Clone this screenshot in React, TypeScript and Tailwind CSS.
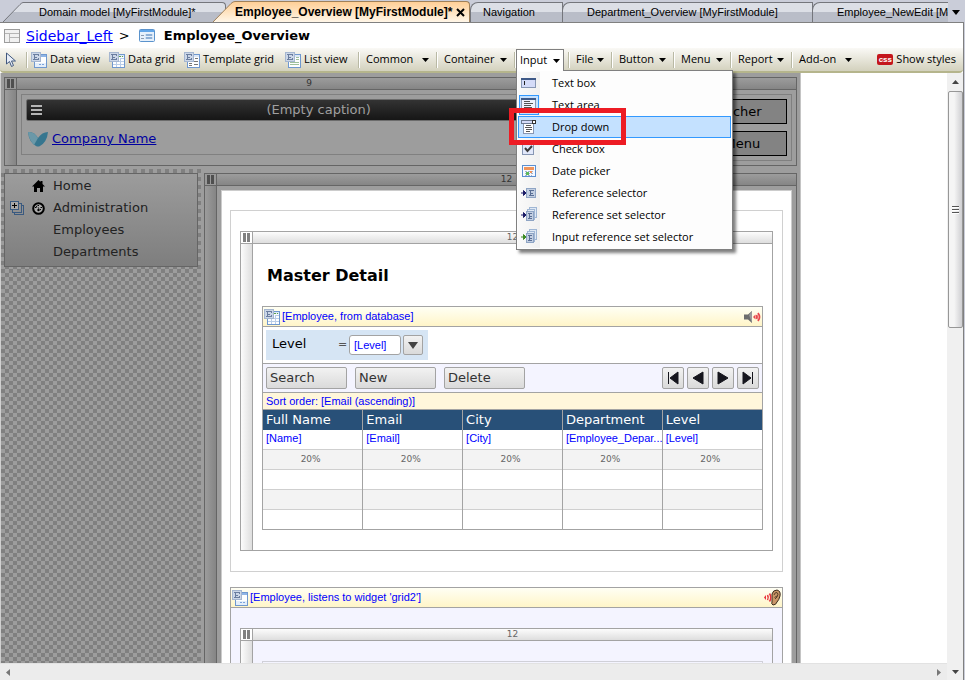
import React from "react";

const UI = "font-['Open_Sans','Noto_Sans',sans-serif]";
const SANS = "font-['Liberation_Sans',Arial,sans-serif]";
const VERDANA = "font-['DejaVu_Sans',Verdana,sans-serif]";

type IconKind = "view" | "grid" | "template" | "list";

function EntityIcon({ kind }: { kind: IconKind }) {
  return (
    <svg width="16" height="16" viewBox="0 0 16 16" className="shrink-0" shapeRendering="crispEdges">
      <rect x="3.5" y="2.5" width="12" height="13" fill="#fdfeff" stroke="#6f98cf" />
      <rect x="4" y="3" width="11" height="2" fill={kind === "view" ? "#8fb5e6" : "#dce8f7"} />
      {kind === "grid" && (
        <>
          <path d="M11 6.500h4M4 9.500h11M4 12.500h11M7.500 10v5M11.500 6v9" stroke="#b9cde8" fill="none" />
          <path d="M10 4.500h2M13 4.500h1" stroke="#5aa04c" fill="none" />
        </>
      )}
      {kind === "view" && (
        <>
          <rect x="4" y="11" width="11" height="4" fill="#e4eefa" />
          <path d="M8 12.500h2M11 12.500h2" stroke="#7ba4dc" fill="none" />
        </>
      )}
      {kind === "template" && (
        <path d="M11 6.500h3M5 11.500h3M5 13.500h3M10 9.500h4M10 12.500h4" stroke="#777" fill="none" />
      )}
      {kind === "list" && <path d="M11 5.500h3M11 7.500h3M5 10.500h9M5 12.500h9" stroke="#9fc09c" fill="none" />}
      <rect x="0.500" y="0.500" width="9" height="9" fill="#ccd7e8" stroke="#a5b6d0" />
      <path d="M2 2.500h5M3.500 3v4M2 7.500h5M4 5h2" stroke="#6a7d9f" fill="none" />
      <path d="M7.500 2v2M7.500 6v2" stroke="#6a7d9f" />
    </svg>
  );
}

function Caret() {
  return (
    <svg width="7" height="4" viewBox="0 0 7 4" className="shrink-0" aria-hidden="true">
      <path d="M0 0h7L3.500 4z" fill="#000" />
    </svg>
  );
}

/* ---------- document tabs ---------- */

function Tab({ children, className }: { children: React.ReactNode; className: string }) {
  return (
    <button
      className={`flex h-5 items-center overflow-hidden rounded-tl-lg border-l border-r border-t border-[#74767c] bg-linear-to-b from-[#dcdfe6] from-50% to-[#b9bdc8] to-50% whitespace-nowrap text-left ${className}`}
    >
      {children}
    </button>
  );
}

function TabBar() {
  return (
    <nav className={`flex h-[23px] shrink-0 items-end overflow-hidden border-b border-[#808080] bg-[#cacdd9] pl-[3px] text-xs ${SANS}`}>
      <button className="flex h-5 w-[223px] shrink-0 items-end text-left">
        <svg width="20" height="20" viewBox="0 0 20 20" className="shrink-0">
          <defs>
            <linearGradient id="idle-tab" x1="0" y1="0" x2="0" y2="1">
              <stop offset="0.5" stopColor="#dcdfe6" />
              <stop offset="0.5" stopColor="#b9bdc8" />
            </linearGradient>
          </defs>
          <path d="M0 20L17 2.500Q19 .5 20 .5V20z" fill="url(#idle-tab)" />
          <path d="M0 20L17 2.500Q19 .5 20 .5" fill="none" stroke="#74767c" />
        </svg>
        <span className="flex h-5 flex-1 items-center rounded-tr-sm border-r border-t border-[#74767c] bg-linear-to-b from-[#dcdfe6] from-50% to-[#b9bdc8] to-50% pl-4 text-[11px] whitespace-nowrap">
          Domain model [MyFirstModule]*
        </span>
      </button>
      <div className="relative z-10 -ml-[13px] flex h-[21px] w-[257px] shrink-0 items-end">
        <svg width="22" height="21" viewBox="0 0 22 21" className="shrink-0">
          <defs>
            <linearGradient id="active-tab" x1="0" y1="0" x2="0" y2="1">
              <stop offset="0" stopColor="#ffcf96" />
              <stop offset="1" stopColor="#fff6e8" />
            </linearGradient>
          </defs>
          <path d="M0 21L18 2.500Q20 .5 22 .5V21z" fill="url(#active-tab)" />
          <path d="M0 21L18 2.500Q20 .5 22 .5" fill="none" stroke="#a0815a" />
        </svg>
        <div className="flex h-[21px] flex-1 items-center justify-between rounded-tr-sm border-r border-t border-[#a0815a] bg-linear-to-b from-[#ffcf96] to-[#fff6e8] pr-1 text-xs font-bold whitespace-nowrap">
          <button>Employee_Overview [MyFirstModule]*</button>
          <button aria-label="Close tab">
            <svg width="9" height="9" viewBox="0 0 9 9" className="block">
              <path d="M1 1l7 7M8 1L1 8" stroke="#000" strokeWidth="2" />
            </svg>
          </button>
        </div>
      </div>
      <Tab className="w-[93px] shrink-0 pl-3 text-[11px]">Navigation</Tab>
      <Tab className="-ml-px w-[251px] shrink-0 pl-6 text-[11px]">Department_Overview [MyFirstModule]</Tab>
      <Tab className="-ml-px min-w-0 flex-1 border-r-0 pl-6 text-[11px]">Employee_NewEdit [MyFirstModule]</Tab>
      <button className="flex h-5 w-4 shrink-0 items-center justify-center" aria-label="More tabs">
        <svg width="8" height="5" viewBox="0 0 8 5">
          <path d="M0 0h8L4 5z" fill="#000" />
        </svg>
      </button>
    </nav>
  );
}

function Breadcrumb() {
  return (
    <div className={`flex h-[25px] shrink-0 items-center bg-white pl-1 text-[13px] text-black ${VERDANA}`}>
      <svg width="16" height="14" viewBox="0 0 16 14" className="mr-[6px] shrink-0" shapeRendering="crispEdges">
        <rect x=".5" y=".5" width="15" height="13" fill="#f1f1f1" stroke="#9c9c9c" />
        <path d="M1 4.500h14M5.500 4v9M6 8.500h9" stroke="#b5b5b5" />
      </svg>
      <a href="#sidebar" className="text-sm text-[#0000ff] underline">Sidebar_Left</a>
      <span className="ml-[6px] w-5">&gt;</span>
      <svg width="16" height="13" viewBox="0 0 16 13" className="mr-[9px] shrink-0">
        <rect x=".5" y=".5" width="15" height="12" rx="1" fill="#e6f0fb" stroke="#5b93cc" />
        <rect x="1" y="1" width="14" height="2" fill="#62a5e8" />
        <path d="M2 6.500h3M2 9.500h3" stroke="#8d9bb0" />
        <path d="M7 5.500h6v1H7zM7 8.500h6v1H7z" fill="#fff" stroke="#8fb0d6" />
      </svg>
      <strong>Employee_Overview</strong>
    </div>
  );
}

/* ---------- toolbar ---------- */

function Separator() {
  return <span className="h-4 w-[2px] shrink-0 border-l border-[#b9b9a4] bg-white" />;
}

function ToolButton({ kind, label, className }: { kind: IconKind; label: string; className: string }) {
  return (
    <button className={`flex shrink-0 items-center gap-[3px] whitespace-nowrap ${className}`}>
      <EntityIcon kind={kind} />
      {label}
    </button>
  );
}

function ToolMenu({ label, className }: { label: string; className: string }) {
  return (
    <button className={`flex shrink-0 items-center justify-between whitespace-nowrap pl-[6px] pr-[7px] ${className}`}>
      {label}
      <Caret />
    </button>
  );
}

function MenuGlyph({ name }: { name: string }) {
  const set = name === "refset" || name === "inputset";
  return (
    <svg width="16" height="16" viewBox="0 0 16 16" className="shrink-0" shapeRendering="crispEdges">
      {name === "text" && (
        <>
          <rect x=".5" y="3.500" width="14" height="9" fill="#d4dbf8" stroke="#8796b3" />
          <path d="M0 4h15" stroke="#3f5a88" strokeWidth="2" />
          <path d="M3.500 6v4" stroke="#222" />
        </>
      )}
      {name === "area" && (
        <>
          <rect x=".5" y="1.500" width="14" height="13" fill="#eef1ff" stroke="#8796b3" />
          <path d="M0 2h15" stroke="#3f5a88" strokeWidth="2" />
          <path d="M3 4.500h6M3 6.500h9M3 8.500h7M3 10.500h8M3 12.500h5" stroke="#555" />
        </>
      )}
      {name === "drop" && (
        <>
          <rect x="2.500" y="4.500" width="10" height="10" fill="#fff" stroke="#8796b3" />
          <rect x=".5" y="1.500" width="14" height="3" fill="#d4dbf8" stroke="#69788f" />
          <rect x="11.500" y="1.500" width="3" height="3" fill="#fff" stroke="#333" />
          <path d="M5 6.500h5M4 8.500h7M5 10.500h6M5 12.500h4" stroke="#555" />
        </>
      )}
      {name === "check" && (
        <>
          <rect x="1.500" y="1.500" width="11" height="12" fill="#e2e8fa" stroke="#8796b3" />
          <path d="M4 7l2.500 3L11 5" stroke="#3b3b3b" strokeWidth="2" fill="none" shapeRendering="auto" />
        </>
      )}
      {name === "date" && (
        <>
          <rect x="1.500" y="2.500" width="13" height="11" fill="#f5f8ff" stroke="#5b8fd0" />
          <rect x="3" y="4" width="10" height="3" fill="#f0935a" />
          <path d="M4 8.500h9M4 10.500h9M4 12.500h7" stroke="#9fb3cf" strokeDasharray="2 1" />
          <rect x="5" y="9" width="3" height="3" fill="#5cb85c" />
          <rect x="9" y="8" width="2" height="2" fill="#f0935a" />
        </>
      )}
      {(name === "ref" || set) && (
        <>
          {set && (
            <>
              <rect x="8.500" y=".5" width="7" height="10" fill="#dfe8f4" stroke="#9fb6d4" />
              <rect x="6.500" y="2.500" width="7" height="10" fill="#dfe8f4" stroke="#9fb6d4" />
            </>
          )}
          <rect x="5.500" y={set ? 4.5 : 3.5} width={set ? 7 : 9} height="9" fill="#c3cfe2" stroke="#8ea4c4" />
          <path
            d={set ? "M7 6.500h4M8 6v6M7 11.500h4M8 9h3" : "M8 5.500h5M9 5v6M8 10.500h5M9 8h3"}
            stroke="#5a6f95"
            fill="none"
          />
          <path
            d="M0 8h3M2.500 5.500v5L5 8z"
            stroke={name === "inputset" ? "#3d8b22" : "#1c1c66"}
            fill={name === "inputset" ? "#3d8b22" : "#1c1c66"}
            shapeRendering="auto"
          />
        </>
      )}
    </svg>
  );
}

const inputItems = [
  { label: "Text box", icon: "text" },
  { label: "Text area", icon: "area" },
  { label: "Drop down", icon: "drop" },
  { label: "Check box", icon: "check" },
  { label: "Date picker", icon: "date" },
  { label: "Reference selector", icon: "ref" },
  { label: "Reference set selector", icon: "refset" },
  { label: "Input reference set selector", icon: "inputset" },
];

function InputMenu() {
  return (
    <div className="relative z-20 h-[23px] w-12 shrink-0">
      <button className="relative z-10 mt-px flex h-[22px] w-12 items-center justify-between border border-b-0 border-[#808080] bg-white pl-[3px] pr-[3px]">
        Input
        <Caret />
      </button>
      <div className="absolute left-0 top-[22px] w-[217px] border border-[#808080] bg-[#fdfdfd] p-px shadow-[3px_3px_3px_rgba(0,0,0,0.5)]">
        <ul className="bg-[linear-gradient(to_right,#fafafa,#f0f0f0_22px,#fdfdfd_22px)]">
          {inputItems.map((item) => (
            <li key={item.label}>
              <button
                className={`flex h-[22px] w-full items-center whitespace-nowrap border text-left ${
                  item.icon === "drop" ? "border-[#3399ff] bg-[#c4e1ff]" : "border-transparent"
                }`}
              >
                <span
                  className={`mr-[13px] flex h-5 w-5 items-center justify-center ${
                    item.icon === "area" ? "border border-[#3399ff] bg-[#c4e1ff]" : ""
                  }`}
                >
                  <MenuGlyph name={item.icon} />
                </span>
                {item.label}
              </button>
            </li>
          ))}
        </ul>
      </div>
      <div className="absolute -left-[7px] top-[60px] h-[37px] w-[117px] border-5 border-[#ed1c24]" />
    </div>
  );
}

function Toolbar() {
  return (
    <div
      className={`flex h-[25px] shrink-0 items-center rounded-b-sm border-b-2 border-[#b5b58c] bg-linear-to-b from-[#faf9f6] to-[#d3d1bd] text-[11px] text-black ${UI}`}
    >
      <button className="ml-[5px] w-[21px] shrink-0" aria-label="Select">
        <svg width="12" height="16" viewBox="0 0 12 16">
          <path d="M1.500 1v11l3-2.500 2 5 2-1-2-4.500h4z" fill="#e8eef8" stroke="#41587f" />
        </svg>
      </button>
      <Separator />
      <ToolButton kind="view" label="Data view" className="ml-[3px] w-[78px]" />
      <ToolButton kind="grid" label="Data grid" className="w-[75px]" />
      <ToolButton kind="template" label="Template grid" className="w-[101px]" />
      <ToolButton kind="list" label="List view" className="w-[73px]" />
      <Separator />
      <ToolMenu label="Common" className="w-[76px]" />
      <Separator />
      <ToolMenu label="Container" className="w-[76px]" />
      <Separator />
      <InputMenu />
      <span className="w-1 shrink-0" />
      <Separator />
      <ToolMenu label="File" className="w-[41px]" />
      <Separator />
      <ToolMenu label="Button" className="w-[60px]" />
      <Separator />
      <ToolMenu label="Menu" className="w-[55px]" />
      <Separator />
      <ToolMenu label="Report" className="w-[59px]" />
      <Separator />
      <ToolMenu label="Add-on" className="w-[66px]" />
      <button className="ml-auto flex shrink-0 items-center gap-[3px] pr-[7px] whitespace-nowrap">
        <span className={`flex h-[11px] w-4 items-center justify-center rounded-[2px] bg-[#c4161c] text-[8px] font-bold text-white ${SANS}`}>
          css
        </span>
        Show styles
      </button>
    </div>
  );
}

/* ---------- page editor ---------- */

function Bars({ dark }: { dark?: boolean }) {
  return (
    <span className="flex h-[11px] w-[11px] shrink-0 items-center justify-center gap-px">
      <span className={`h-[9px] w-[3px] ${dark ? "bg-[#4f4f4f]" : "bg-[#808080]"}`} />
      <span className={`h-[9px] w-[3px] ${dark ? "bg-[#4f4f4f]" : "bg-[#808080]"}`} />
    </span>
  );
}

/** A layout grid: a strip of column weights on top, a row handle on the left. */
function LayoutGrid({
  dark,
  weights,
  className = "",
  children,
}: {
  dark?: boolean;
  weights: { n: number; grow: string }[];
  className?: string;
  children: React.ReactNode;
}) {
  const line = dark ? "border-[#656565]" : "border-[#a3a3a3]";
  return (
    <div className={`flex flex-col border ${line} ${className}`}>
      <div className={`flex h-3 shrink-0 border-b ${line}`}>
        <span className={`flex w-3 shrink-0 border-r ${line} ${dark ? "bg-[#999]" : "bg-white"}`}>
          <Bars dark={dark} />
        </span>
        <div className={`flex flex-1 bg-linear-to-b ${dark ? "from-[#9c9c9c] to-[#858585]" : "from-[#fcfcfc] to-[#dedede]"}`}>
          {weights.map((w, i) => (
            <span
              key={i}
              className={`flex basis-0 items-center justify-center text-[9px] leading-[11px] ${w.grow} ${dark ? "text-[#333]" : "text-[#666]"} ${VERDANA}`}
            >
              {w.n}
            </span>
          ))}
        </div>
      </div>
      <div className="flex flex-1">
        <span
          className={`w-3 shrink-0 border-r bg-linear-to-r ${line} ${dark ? "from-[#9c9c9c] to-[#858585]" : "from-[#fcfcfc] to-[#dedede]"}`}
        />
        <div className="flex min-w-0 flex-1">{children}</div>
      </div>
    </div>
  );
}

function PageHeader() {
  return (
    <LayoutGrid dark weights={[{ n: 9, grow: "grow-9" }, { n: 3, grow: "grow-3" }]}>
      <div className="flex min-w-0 grow-9 basis-0 p-1 pb-[10px]">
        <div className="flex-1 border border-[#808080] p-1">
          <div className="flex h-[22px] items-center rounded-[2px] border border-[#6c6c6c] bg-linear-to-b from-[#333] to-[#161616] px-1 text-[13px] leading-5 text-[#a0a0a0]">
            <svg width="11" height="10" viewBox="0 0 11 10" className="mb-px shrink-0" shapeRendering="crispEdges">
              <path d="M0 0h11v2H0zM0 4h11v2H0zM0 8h11v2H0z" fill="#b5b5b5" />
            </svg>
            <span className="flex-1 pl-3 pb-px text-center">(Empty caption)</span>
          </div>
          <div className="flex h-7 items-center pl-[2px] pt-[7px]">
            <svg width="20" height="16" viewBox="0 0 20 16" className="mr-1 shrink-0">
              <path d="M0 1q6-1 10 6q4-6 10-6q-1 10-8 14q-2 1-4 0Q1 11 0 1z" fill="#36768f" />
              <path d="M0 1q6-1 10 6l-4 7Q1 9 0 1z" fill="#6a98a8" />
            </svg>
            <a href="#company" className="text-[13px] text-[#0000a0] underline">Company Name</a>
          </div>
        </div>
      </div>
      <div className="flex min-w-0 grow-3 basis-0 p-1">
        <div className="flex flex-1 flex-col gap-[7px] border border-[#808080] p-1 text-[13px]">
          <button className="h-[25px] border border-black bg-[#838383] leading-5">Demo user switcher</button>
          <button className="h-[25px] border border-black bg-[#838383] leading-5">Show sidebar Menu</button>
        </div>
      </div>
    </LayoutGrid>
  );
}

function Sidebar() {
  return (
    <div className="w-[200px] shrink-0 bg-[repeating-conic-gradient(#808080_0_25%,#9d9d9d_0_50%)] bg-[length:8px_8px] px-[3px] pt-1">
      <ul className="border border-[#656565] bg-linear-to-b from-[#9c9c9c] to-[#7e7e7e] pt-px pb-[3px] text-[13px] text-[#222]">
        <li className="flex h-[22px] items-center">
          <span className="w-6" />
          <svg width="13" height="12" viewBox="0 0 13 12" className="ml-[3px] mr-2">
            <path d="M6.500 0L0 6.500h2V12h3V8h3v4h3V6.500h2L10.500 4V1h-2v1z" fill="#000" />
          </svg>
          Home
        </li>
        <li className="flex h-[22px] items-center">
          <svg width="14" height="14" viewBox="0 0 14 14" className="ml-[5px] mr-[8px]" shapeRendering="crispEdges">
            <path d="M9 2.500h2.500v9h-9V9M11 4.500h2.500v9h-9V11" fill="none" stroke="#3a5a80" />
            <rect x=".5" y=".5" width="8" height="8" fill="#a8a8a8" stroke="#3a5a80" />
            <path d="M2 4.500h5M4.500 2v5" stroke="#000" />
          </svg>
          <svg width="13" height="13" viewBox="0 0 13 13" className="mr-2">
            <circle cx="6.500" cy="6.500" r="5.300" fill="#aaa" stroke="#000" strokeWidth="2" />
            <path d="M3 5.500h1.500M5.500 3.500h2M8.500 5.500H10M4 4l5 4" stroke="#000" fill="none" strokeDasharray="1.500 1" />
            <circle cx="6.500" cy="8" r="1.200" />
          </svg>
          Administration
        </li>
        <li className="flex h-[22px] items-center pl-12">Employees</li>
        <li className="flex h-[22px] items-center pl-12">Departments</li>
      </ul>
    </div>
  );
}

function SpeakerIcon() {
  return (
    <svg width="17" height="14" viewBox="0 0 17 14">
      <path d="M0 4.500h4L8 1v12L4 9.500H0z" fill="#6d6d6d" />
      <path d="M5 5l3-4v12z" fill="#9b9b9b" />
      <path d="M11.500 4.500L9 7l2.500 2.500z" fill="#e8474c" />
      <path d="M12.500 5q1 2 0 4M14 3q3 4 0 8" fill="none" stroke="#e8474c" strokeWidth="1.800" />
    </svg>
  );
}

function EarIcon() {
  return (
    <svg width="17" height="17" viewBox="0 0 17 17">
      <path d="M8 5Q9 1 13 1q4 1 3 6q-1 4-3 6q-1 3-4 3q-2-1-1-3z" fill="#c89668" stroke="#3b2a1c" />
      <path d="M10 6q1-3 3-2.500q2 1 0 4.500l-2 2M10.500 8.500L13 7" fill="none" stroke="#59402a" />
      <path d="M2 6L0 8.500L2 11z" fill="#e8303c" />
      <path d="M3.500 6q1.500 2.500 0 5M5.500 4.500q2.500 4 0 8" fill="none" stroke="#e8303c" strokeWidth="1.500" />
    </svg>
  );
}

function WidgetBar({ kind, text, children }: { kind: IconKind; text: string; children: React.ReactNode }) {
  return (
    <div
      className={`flex h-5 items-center border-b border-[#a3a3a3] bg-linear-to-b from-[#fffff4] to-[#fff5c8] px-[1px] text-[11px] text-[#0000ff] ${SANS}`}
    >
      <EntityIcon kind={kind} />
      <span className="ml-[2px] flex-1">{text}</span>
      {children}
    </div>
  );
}

const gridButton = "rounded-[2px] border border-[#a3a3a3] bg-linear-to-b from-[#f2f2f2] to-[#dadada]";

const pagers = [
  { label: "First", d: "M2.500 1v12M12 1v12L4 7z" },
  { label: "Previous", d: "M12 1v12L2 7z" },
  { label: "Next", d: "M2 1v12l10-6z" },
  { label: "Last", d: "M11.500 1v12M2 1v12l8-6z" },
];

const columns = [
  { title: "Full Name", value: "[Name]" },
  { title: "Email", value: "[Email]" },
  { title: "City", value: "[City]" },
  { title: "Department", value: "[Employee_Depar..." },
  { title: "Level", value: "[Level]" },
];

function DataGrid() {
  const cell = "border-r border-[#a3a3a3] last:border-r-0";
  return (
    <div className="border border-[#a3a3a3] bg-white">
      <WidgetBar kind="grid" text="[Employee, from database]">
        <SpeakerIcon />
      </WidgetBar>
      <div className="h-[37px] border-b border-[#a3a3a3] p-[3px]">
        <div className="flex h-[30px] w-[162px] items-center bg-[#d6e5f4] pl-[6px]">
          <label htmlFor="level" className="w-[66px] pb-[2px] text-[13px] text-black">Level</label>
          <span className="w-[11px] text-[11px] text-[#555]">=</span>
          <select
            id="level"
            className={`h-5 w-[52px] appearance-none rounded-[3px] border border-[#a3a3a3] bg-white pl-1 text-[11px] text-[#0000ff] ${SANS}`}
          >
            <option>[Level]</option>
          </select>
          <button className={`ml-[2px] flex h-5 w-5 items-center justify-center ${gridButton}`} aria-label="Open level list">
            <svg width="10" height="7" viewBox="0 0 10 7">
              <path d="M0 0h10L5 7z" fill="#444" />
            </svg>
          </button>
        </div>
      </div>
      <div className="flex h-[29px] items-center gap-2 border-b border-[#a3a3a3] bg-[#f4f4ff] pl-[3px] pr-[3px] text-[13px] text-[#333]">
        {["Search", "New", "Delete"].map((label) => (
          <button key={label} className={`h-[22px] w-[81px] pl-[3px] text-left ${gridButton}`}>
            {label}
          </button>
        ))}
        <div className="ml-auto flex gap-[3px]">
          {pagers.map((p) => (
            <button key={p.label} aria-label={p.label} className={`flex h-[22px] w-[22px] items-center justify-center ${gridButton}`}>
              <svg width="14" height="14" viewBox="0 0 14 14">
                <path d={p.d} fill="#16161e" stroke="#16161e" strokeWidth="1" />
              </svg>
            </button>
          ))}
        </div>
      </div>
      <div className={`h-[17px] border-b border-[#a3a3a3] bg-[#fff6db] pl-[3px] text-[11px] leading-4 text-[#0000ff] ${SANS}`}>
        Sort order: [Email (ascending)]
      </div>
      <table className="w-full table-fixed border-collapse text-left">
        <thead>
          <tr className="h-5 bg-[#285078] text-[13px] leading-5 text-white">
            {columns.map((c) => (
              <th key={c.title} className={`px-[3px] py-0 font-normal ${cell}`}>{c.title}</th>
            ))}
          </tr>
        </thead>
        <tbody>
          <tr className={`h-[19px] border-b border-[#cfcfcf] text-[11px] leading-4 text-[#0000ff] ${SANS}`}>
            {columns.map((c) => (
              <td key={c.title} className={`whitespace-nowrap py-0 pl-[3px] pr-0 align-top ${cell}`}>{c.value}</td>
            ))}
          </tr>
          <tr className="h-5 border-b border-[#cfcfcf] bg-[#f3f3f3] text-center text-[9px] leading-[18px] text-[#666]">
            {columns.map((c) => (
              <td key={c.title} className={`p-0 pr-1 ${cell}`}>20%</td>
            ))}
          </tr>
          {["bg-white border-b", "bg-[#f3f3f3] border-b", "bg-white"].map((row, i) => (
            <tr key={i} className={`h-5 border-[#cfcfcf] ${row}`}>
              {columns.map((c) => (
                <td key={c.title} className={`p-0 ${cell}`} />
              ))}
            </tr>
          ))}
        </tbody>
      </table>
    </div>
  );
}

function PageBody() {
  return (
    <LayoutGrid dark weights={[{ n: 12, grow: "grow" }]} className="mt-1 mr-[3px] min-w-0 flex-1">
      <div className="min-w-0 flex-1 p-1">
        <div className="h-full border border-[#ccc] bg-white px-2 pt-[19px]">
          <div className="border border-[#d0d0d0] px-[9px] py-5">
            <LayoutGrid weights={[{ n: 12, grow: "grow" }]}>
              <div className="min-w-0 flex-1 px-[9px] pb-5">
                <h1 className="pl-[5px] pt-[22px] text-base leading-5 font-bold text-black">Master Detail</h1>
                <div className="h-5" />
                <DataGrid />
              </div>
            </LayoutGrid>
          </div>
          <div className="mt-[15px] border border-[#a3a3a3] bg-[#f4f4ff]">
            <WidgetBar kind="view" text="[Employee, listens to widget 'grid2']">
              <EarIcon />
            </WidgetBar>
            <div className="px-[9px] pt-5">
              <LayoutGrid weights={[{ n: 12, grow: "grow" }]}>
                <div className="min-w-0 flex-1 px-[9px] pt-5">
                  <div className="h-10 border border-[#d0d0d8]" />
                </div>
              </LayoutGrid>
            </div>
          </div>
        </div>
      </div>
    </LayoutGrid>
  );
}

function VerticalScrollbar() {
  return (
    <div className="flex w-4 shrink-0 flex-col items-center bg-[#f0f0f0]">
      <button className="flex h-[18px] w-full items-center justify-center" aria-label="Scroll up">
        <svg width="7" height="4" viewBox="0 0 7 4">
          <path d="M0 4h7L3.500 0z" fill="#444" />
        </svg>
      </button>
      <div className="flex h-[237px] w-[15px] flex-col items-center justify-center gap-px rounded-[2px] border border-[#979797] bg-linear-to-r from-[#f5f5f5] from-40% to-[#cfcfd2]">
        <span className="h-[2px] w-[7px] border-t border-[#555] bg-white" />
        <span className="h-[2px] w-[7px] border-t border-[#555] bg-white" />
        <span className="h-[2px] w-[7px] border-t border-[#555] bg-white" />
      </div>
      <button className="mt-auto flex h-[17px] w-full items-center justify-center" aria-label="Scroll down">
        <svg width="7" height="4" viewBox="0 0 7 4">
          <path d="M0 0h7L3.500 4z" fill="#444" />
        </svg>
      </button>
    </div>
  );
}

function HorizontalScrollbar() {
  return (
    <div className="flex h-[17px] shrink-0 items-center justify-between border-t border-[#e2e2e2] bg-[#ececec] px-[6px]">
      <button aria-label="Scroll left">
        <svg width="4" height="7" viewBox="0 0 4 7" className="block">
          <path d="M4 0v7L0 3.500z" fill="#777" />
        </svg>
      </button>
      <button aria-label="Scroll right">
        <svg width="4" height="7" viewBox="0 0 4 7" className="block">
          <path d="M0 0v7l4-3.500z" fill="#777" />
        </svg>
      </button>
    </div>
  );
}

export default function App() {
  return (
    <div className="flex h-screen flex-col overflow-hidden bg-[#cacdd9] pr-px">
      <TabBar />
      <div className="flex min-h-0 flex-1 flex-col border-r border-[#808080] bg-white">
        <Breadcrumb />
        <Toolbar />
        <div className="flex min-h-0 flex-1">
          <div className="flex min-w-0 flex-1 flex-col">
            <main className={`flex min-h-0 flex-1 overflow-hidden border-l border-[#d0d0d0] bg-white ${VERDANA}`}>
              <div className="flex min-w-0 flex-1 flex-col border-r border-[#c4c4c4] bg-[#9d9d9d]">
                <div className="pt-1 pr-[3px] pl-[3px]">
                  <PageHeader />
                </div>
                <div className="mt-[3px] flex flex-1 gap-[3px]">
                  <Sidebar />
                  <PageBody />
                </div>
              </div>
              <div className="w-[146px] shrink-0" />
            </main>
            <HorizontalScrollbar />
          </div>
          <VerticalScrollbar />
        </div>
      </div>
    </div>
  );
}
